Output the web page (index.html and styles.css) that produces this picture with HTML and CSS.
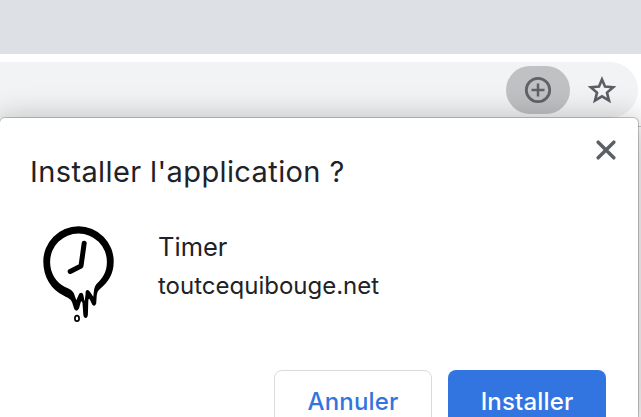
FILE: index.html
```html
<!DOCTYPE html>
<html lang="fr">
<head>
<meta charset="utf-8">
<title>Timer</title>
<link rel="stylesheet" href="styles.css">
</head>
<body>
<div class="window">
  <div class="tabstrip"></div>
  <div class="toolbar">
    <div class="omnibox">
      <span class="install-chip">
        <svg width="28" height="28" viewBox="0 0 28 28" fill="none" stroke="#5f6367">
          <circle cx="14" cy="14" r="11.7" stroke-width="2.8"/>
          <path d="M14 7.5v13M7.5 14h13" stroke-width="2.5"/>
        </svg>
      </span>
      <svg class="star" width="30" height="30" viewBox="0 0 30 30">
        <path fill="none" stroke="#5b5f63" stroke-width="2.6" d="M15 4.4l3 7.2 8.2.6-6.2 5.4 2 8-7-4.3-7 4.3 2-8-6.2-5.4 8.2-.6z"/>
      </svg>
    </div>
  </div>
  <div class="page"></div>
</div>
<section class="dialog">
  <button class="close" aria-label="Fermer">
    <svg width="20" height="20" viewBox="0 0 20 20"><path d="M2.2 2.2l15.6 15.6M17.8 2.2L2.2 17.8" stroke="#5c6066" stroke-width="3.5" stroke-linecap="round" fill="none"/></svg>
  </button>
  <h1 class="title">Installer l'application ?</h1>
  <div class="app">
    <svg class="app-icon" width="74" height="98" viewBox="0 0 74 98">
      <path fill="#000" fill-rule="evenodd" d="M36.5 1.2A35.2 35.2 0 0 1 71.7 36.8C71.7 49 66 57.5 58.5 63.5C55.5 66 55 68 54.7 71L54.2 78.5Q52.6 82.5 50.2 79.5L47.8 74.5Q46.5 72.5 46.3 76L45.9 89.5Q45.6 92.9 43.7 92.9Q41.6 92.9 41.3 89.5L40.5 78Q39.4 74.5 38.5 78L37 83.5Q34.7 87.5 32.2 84L30.2 77.5C28.5 73 25 72.7 21.5 70.5C9.5 65 1.3 52 1.3 36.8A35.2 35.2 0 0 1 36.5 1.2ZM36.5 8.5A28.4 28.4 0 0 0 8.1 37C8.1 48 14 57.5 23 62C28 64.2 31 65.5 32.3 69.5L34.3 75.2L36.4 70.5Q37 67.8 39 67.8Q41 67.8 41.5 71L42.6 76.5L43.6 69Q43.3 64.9 45.6 64.9Q47.2 65 48.6 67.8L51.3 71.8C52 68 51.4 63.5 54.3 59.3C60.5 53.5 64.9 47 64.9 37A28.4 28.4 0 0 0 36.5 8.5Z"/>
      <path d="M42.2 18.2L39 41L28.2 46.5" fill="none" stroke="#000" stroke-width="5" stroke-linecap="round" stroke-linejoin="round"/>
      <ellipse cx="35" cy="93.4" rx="2.1" ry="2.7" fill="none" stroke="#000" stroke-width="1.7"/>
    </svg>
    <div class="app-info">
      <div class="name">Timer</div>
      <div class="origin">toutcequibouge.net</div>
    </div>
  </div>
  <div class="actions">
    <button class="btn cancel">Annuler</button>
    <button class="btn install">Installer</button>
  </div>
</section>
</body>
</html>
```
FILE: styles.css
```css
* { box-sizing: border-box; }
html, body { height: 100%; }
body {
  margin: 0;
  overflow: hidden;
  position: relative;
  background: #fff;
  font-family: Inter, "Liberation Sans", sans-serif;
  color: #202227;
}
.window { height: 100%; display: flex; flex-direction: column; }
.tabstrip { height: 54px; background: #dde1e6; flex: none; }
.toolbar {
  height: 73px;
  flex: none;
  padding: 8px 3px 8px 0;
  border-bottom: 1px solid #c8c9ca;
}
.omnibox {
  height: 56px;
  display: flex;
  align-items: center;
  justify-content: flex-end;
  padding-right: 21px;
  gap: 17px;
  background: #f1f3f4;
  border-radius: 0 28px 28px 0;
}
.install-chip {
  width: 64px;
  height: 48px;
  border-radius: 24px;
  background: #bfc1c2;
  display: flex;
  align-items: center;
  justify-content: center;
}
.page { flex: 1; background: #fff; }
.dialog {
  position: absolute;
  top: 118px;
  bottom: 0;
  left: 0;
  width: 638px;
  padding: 34px 32px 0 30px;
  display: flex;
  flex-direction: column;
  overflow: hidden;
  background: #fff;
  border-radius: 5px 5px 0 0;
  box-shadow: 0 0 0 1px rgba(0, 0, 0, .2), 0 6px 32px 4px rgba(0, 0, 0, .27);
}
.close {
  position: absolute;
  top: 22px;
  right: 22px;
  width: 20px;
  height: 20px;
  padding: 0;
  border: 0;
  background: none;
}
.close svg { display: block; }
.title {
  margin: 0;
  font-size: 29px;
  line-height: 40px;
  font-weight: 400;
  letter-spacing: .39px;
}
.app { display: flex; margin-top: 33px; padding-left: 12px; }
.app-info { margin-left: 42px; padding-top: 2px; }
.name { font-size: 25.5px; line-height: 40px; }
.origin { font-size: 24px; line-height: 38px; }
.actions {
  display: flex;
  justify-content: flex-end;
  gap: 16px;
  margin-top: 47px;
}
.btn {
  width: 158px;
  height: 62px;
  padding: 0;
  border-radius: 8px;
  font: 450 24px Inter, "Liberation Sans", sans-serif;
  letter-spacing: .15px;
}
.cancel { color: #3275e0; background: #fff; border: 1px solid #d9dbde; }
.install { color: #fff; background: #3275e0; border: 0; }
```
